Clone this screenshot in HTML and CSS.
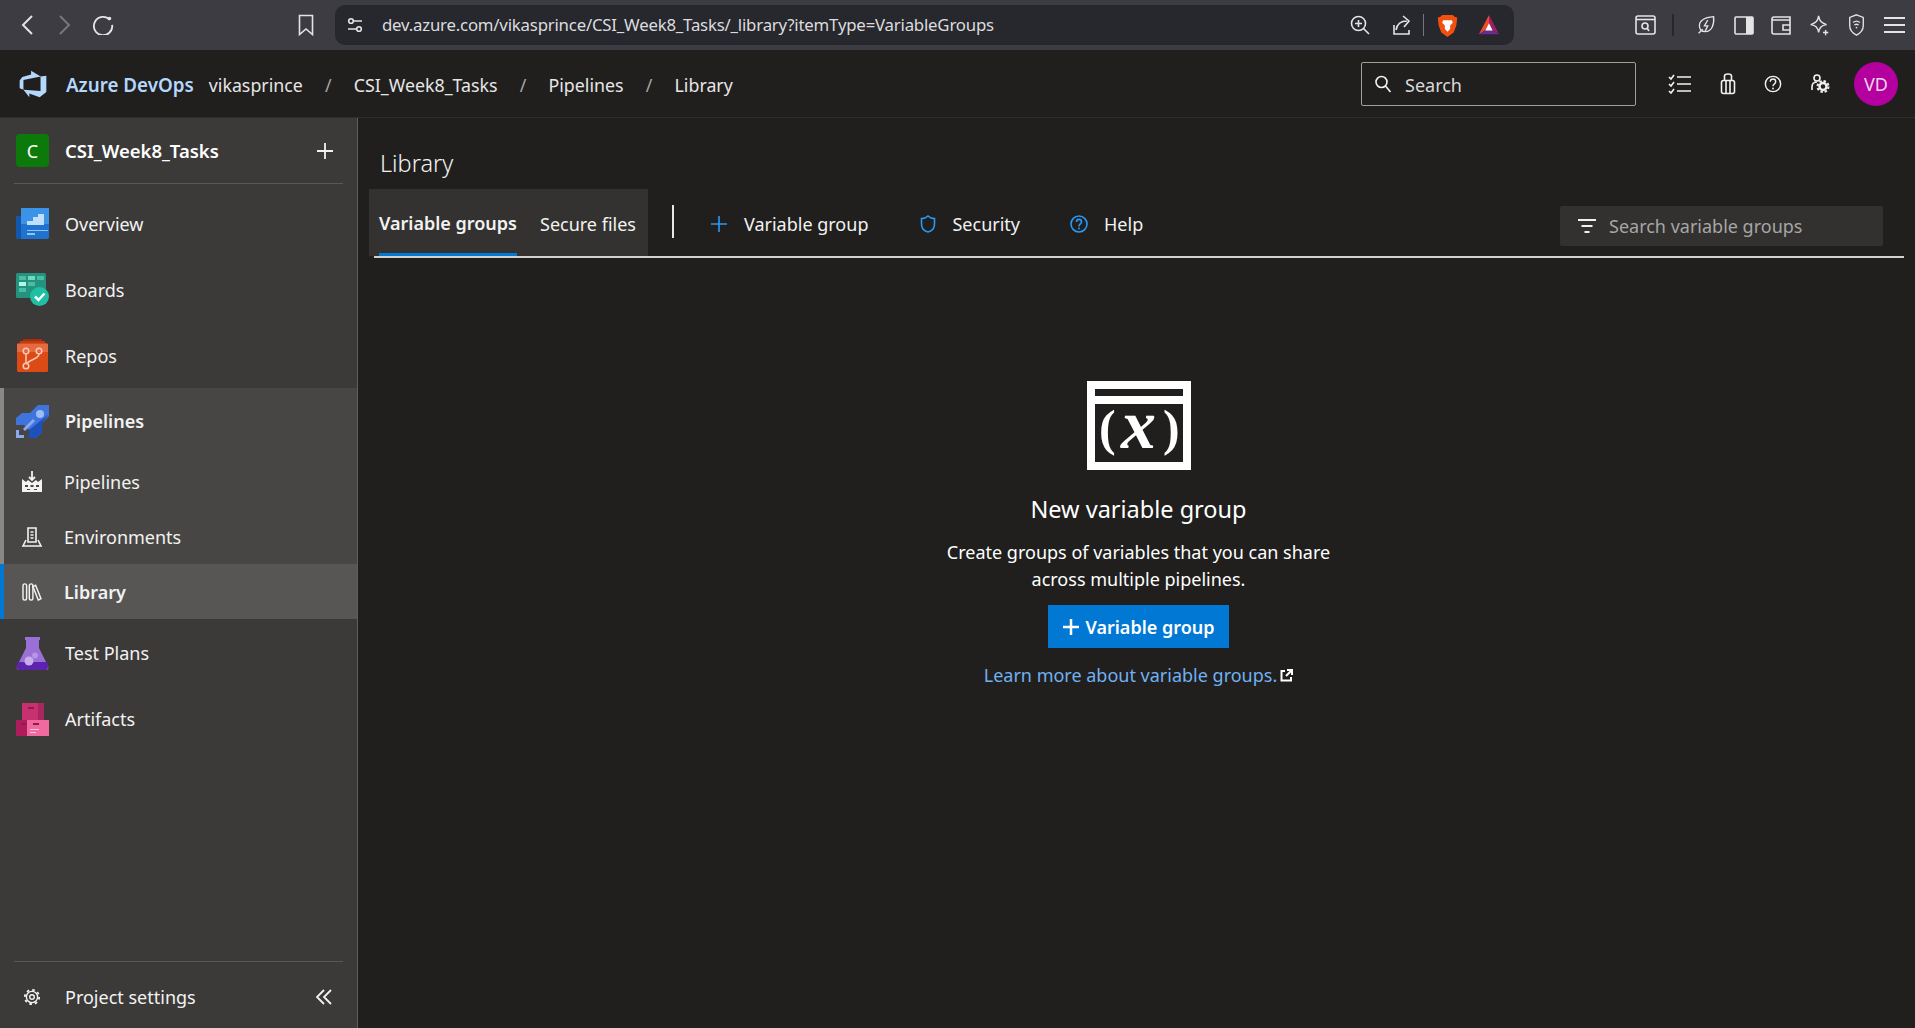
FILE: index.html
```html
<!DOCTYPE html>
<html lang="en">
<head>
    <meta charset="UTF-8">
    <title>Library - Azure DevOps</title>
    <link rel="stylesheet" href="styles.css">
</head>
<body>
    <div class="browser-bar">
        <svg class="b-back" width="16" height="24" viewBox="0 0 16 24"><path d="M12 3 3 12l9 9" class="ln"/></svg>
        <svg class="b-forward" width="16" height="24" viewBox="0 0 16 24"><path d="M4 3l9 9-9 9" class="ln dim"/></svg>
        <svg class="b-reload" width="22" height="22" viewBox="0 0 24 24"><path d="M19.500 7.500A10 10 0 1 0 22 13" class="ln"/><circle cx="19" cy="6" r="2" fill="#e4e4e6"/></svg>
        <svg class="b-mark" width="16" height="22" viewBox="0 0 16 22"><path d="M1.500 1.500h13v19L8 15l-6.500 5.500z" class="ln thin"/></svg>
        <div class="address">
            <svg width="16" height="16" viewBox="0 0 16 16"><circle cx="4" cy="4" r="2.300" class="ln thin"/><path d="M7 4h8M1 12h8" class="ln thin"/><circle cx="12" cy="12" r="2.300" class="ln thin"/></svg>
            <span class="url">dev.azure.com/vikasprince/CSI_Week8_Tasks/_library?itemType=VariableGroups</span>
            <svg class="a-zoom" width="20" height="20" viewBox="0 0 20 20"><circle cx="8.500" cy="8.500" r="7" class="ln thin"/><path d="M13.500 13.500l5.500 5.500M8.500 5v7M5 8.500h7" class="ln thin"/></svg>
            <svg class="a-share" width="20" height="20" viewBox="0 0 20 20"><path d="M2 10v9h15v-4M4 15c1-6 5-9 11-9M11 1l6 5-5 6" class="ln thin"/></svg>
            <span class="a-sep"></span>
            <svg class="a-brave" width="21" height="23" viewBox="0 0 22 26"><path d="M5 1h12l2 2 3 1-1 9-3 8-7 5-7-5-3-8L0 4l3-1z" fill="#f1500f"/><path d="M6 7h10l1 3-3 3v4l-3 3-3-3v-4L5 10z" fill="#fff"/></svg>
            <svg class="a-bat" width="24" height="22" viewBox="0 0 24 24"><path d="M12 1 1 22l11-7z" fill="#ee4b2b"/><path d="M12 1l11 21-11-7z" fill="#9e1f63"/><path d="M1 22h22l-11-7z" fill="#6b2c91"/><path d="M12 10l-4 8h8z" fill="#fff"/></svg>
        </div>
        <div class="browser-tools">
            <svg width="21" height="20" viewBox="0 0 21 20"><rect x="1" y="1" width="19" height="18" rx="2" class="ln thin"/><path d="M1 4.500h19" class="ln thin"/><circle cx="10" cy="11" r="3" class="ln thin"/><path d="M12 13l2 3" class="ln thin"/></svg>
            <span class="tool-sep"></span>
            <svg width="19" height="20" viewBox="0 0 21 24"><path d="M2 13c0-6 6-10 17-11 1 9-2 18-10 18-5 0-7-3-7-7zM1 22l5-5M12 6l-4 7h4l-3 6" class="ln thin"/></svg>
            <svg width="20" height="19" viewBox="0 0 20 19"><rect x="1" y="1" width="18" height="17" rx="1" class="ln thin"/><rect x="12" y="1" width="7" height="17" fill="#e4e4e6"/></svg>
            <svg width="20" height="19" viewBox="0 0 20 19"><path d="M19 4V1H3a2 2 0 0 0-2 2v13a2 2 0 0 0 2 2h16v-4M1 4h18v10h-7v-5h7" class="ln thin"/></svg>
            <svg width="21" height="21" viewBox="0 0 22 24"><path d="M10 1c1 6 3 8 9 10-6 1-8 3-9 9-1-6-3-8-9-9 6-2 8-4 9-10z" class="ln thin"/><path d="M18 17v6M15 20h6" class="ln thin"/></svg>
            <svg width="19" height="22" viewBox="0 0 20 26"><path d="M10 1l8 3v10c0 5-4 9-8 11-4-2-8-6-8-11V4z" class="ln thin"/><path d="M6 10c2.500-2 5.500-2 8 0M7.500 13c1.500-1 3.500-1 5 0" class="ln thin"/><circle cx="10" cy="16" r="1" fill="#e4e4e6"/></svg>
            <svg width="21" height="18" viewBox="0 0 21 18"><path d="M0 2h21M0 9h21M0 16h21" class="ln"/></svg>
        </div>
    </div>

    <header class="top-nav">
        <svg class="logo" width="30" height="30" viewBox="0 0 18 18"><path d="M17 4v9.740l-4 3.280-6.200-2.260V17l-3.510-4.590 10.230.8V4.440zm-3.410.49L7.850 1v2.290L2.580 4.840 1 6.870v4.610l2.260 1V6.570z" fill="#b4d8fb"/></svg>
        <span class="brand">Azure DevOps</span>
        <nav class="crumbs">
            <span>vikasprince</span><i>/</i>
            <span>CSI_Week8_Tasks</span><i>/</i>
            <span>Pipelines</span><i>/</i>
            <span>Library</span>
        </nav>
        <div class="global-search">
            <svg width="18" height="18" viewBox="0 0 18 18"><circle cx="7.500" cy="7" r="5.500" class="ln thin"/><path d="M11.500 11l5 6" class="ln thin"/></svg>
            <span>Search</span>
        </div>
        <div class="top-icons">
            <svg width="24" height="20" viewBox="0 0 24 20"><path d="M9 3h14M9 10h14M9 17h14M1 3l2 2 3-4M1 10l2 2 3-4M1 17l2 2 3-4" class="ln thin"/></svg>
            <svg width="16" height="22" viewBox="0 0 16 22"><rect x="1.500" y="7.500" width="13" height="13" rx="2" class="ln thin"/><path d="M4.500 7.500V3a3.500 2 0 0 1 7 0v4.500M6 7.500v13M10 7.500v13" class="ln thin"/></svg>
            <svg width="18" height="18" viewBox="0 0 20 20"><circle cx="10" cy="10" r="8.500" class="ln thin"/><path d="M7 7.500c0-4 6-4 6 0 0 2.500-3 2.500-3 5" class="ln thin"/><circle cx="10" cy="15" r="1" fill="#f0f0f0"/></svg>
            <svg width="20" height="19" viewBox="0 0 20 19"><circle cx="7" cy="4" r="3" class="ln thin"/><path d="M2 16v-3c0-3 2-5 5-5" class="ln thin"/><circle cx="13" cy="12.500" r="3.500" fill="none" stroke="#f0f0f0" stroke-width="2.500"/><circle cx="13" cy="12.500" r="5.500" fill="none" stroke="#f0f0f0" stroke-width="2" stroke-dasharray="2.500 1.800"/></svg>
            <div class="avatar">VD</div>
        </div>
    </header>

    <div class="page">
        <aside class="sidebar">
            <div class="project">
                <div class="project-badge">C</div>
                <span class="project-name">CSI_Week8_Tasks</span>
                <svg class="project-add" width="18" height="18" viewBox="0 0 18 18"><path d="M9 1v16M1 9h16" class="ln plain"/></svg>
            </div>
            <ul class="nav-list first">
                <li class="nav-item">
                    <svg class="nav-icon" width="33" height="31" viewBox="0 0 33 31"><path d="M5 0h26a2 2 0 0 1 2 2v27a2 2 0 0 1-2 2H2a2 2 0 0 1-2-2V8h5z" fill="#1f72d0"/><path d="M5 0h28v16H5z" fill="#3b93e8"/><path d="M0 8h5v23H2a2 2 0 0 1-2-2z" fill="#1257ab"/><path d="M11 17v-4h6V9h5V6h6v11z" fill="#bfe0fb"/><path d="M11 22h21v1H11zM11 25h8v2h-8z" fill="#8ec5f5"/></svg>
                    <span>Overview</span>
                </li>
                <li class="nav-item">
                    <svg class="nav-icon" width="33" height="33" viewBox="0 0 33 33"><rect width="30" height="25" rx="1.500" fill="#24927f"/><path d="M3 3h7v4H3zM12 3h7v4h-7zM21 3h7v4h-7zM12 9h7v4h-7zM3 15h7v4H3z" fill="#46bda4"/><path d="M3 9h7v4H3z" fill="#b3f5e3"/><path d="M12 3h7v4h-7z" fill="#72d8c2"/><circle cx="23.500" cy="23.500" r="9.500" fill="#1fbfa4"/><path d="M19 23.500l3.500 3.500 6-6.500" fill="none" stroke="#fff" stroke-width="2.500"/></svg>
                    <span>Boards</span>
                </li>
                <li class="nav-item">
                    <svg class="nav-icon" width="33" height="33" viewBox="0 0 33 33"><path d="M7 0h19v4H7z" fill="#a82e10"/><path d="M4 2h25v4H4z" fill="#c03d14"/><rect x="1" y="4" width="31" height="29" rx="1.500" fill="#dc4a16"/><path d="M1 5h31v8H1z" fill="#e66a3f"/><circle cx="10" cy="12" r="2.800" fill="none" stroke="#fbc9b2" stroke-width="1.500"/><circle cx="23" cy="12" r="2.800" fill="none" stroke="#fbc9b2" stroke-width="1.500"/><circle cx="10" cy="27" r="2.800" fill="none" stroke="#fbc9b2" stroke-width="1.500"/><path d="M10 15v9M23 15c0 5-7 4-13 10" fill="none" stroke="#fbc9b2" stroke-width="1.500"/></svg>
                    <span>Repos</span>
                </li>
            </ul>
            <div class="nav-group">
                <div class="nav-item group-head">
                    <svg class="nav-icon" width="33" height="33" viewBox="0 0 33 33"><path d="M22 0h11v11l-7 7v9l-6 6h-7v-8l-5-5H0v-7l6-5h8z" fill="#3f74dd"/><path d="M33 9l-7 9v9l-6 6h-7v-8z" fill="#1d4fbd"/><circle cx="24" cy="9" r="4" fill="#9dbdf5"/><path d="M8 25l10-10" stroke="#8aa9ef" stroke-width="3"/><path d="M0 25v8h8v-3H3v-5z" fill="#8aa9ef"/></svg>
                    <span>Pipelines</span>
                </div>
                <div class="nav-sub">
                    <svg width="22" height="22" viewBox="0 0 22 22"><path d="M11 0v9M8 6l3 3 3-3" class="ln plain"/><path d="M1 8v13h20V8l-4 3-2-2-4 3-4-3-2 2z" fill="#f3f3f3"/><path d="M4 14h3v2H4zM9.500 14h3v2h-3zM15 14h3v2h-3zM6 18h3v1H6zM13 18h3v1h-3z" fill="#484644"/></svg>
                    <span>Pipelines</span>
                </div>
                <div class="nav-sub">
                    <svg width="20" height="20" viewBox="0 0 20 20"><path d="M6 1h8v14H6zM8.500 5h3M8.500 8h3M8.500 11h3" class="ln thin"/><path d="M4 13l-3 6h18l-3-6" class="ln thin"/></svg>
                    <span>Environments</span>
                </div>
                <div class="nav-sub current">
                    <svg width="22" height="18" viewBox="0 0 22 20"><rect x="1" y="1" width="4" height="18" rx="2" class="ln thin"/><rect x="8" y="1" width="4" height="18" rx="2" class="ln thin"/><path d="M15 2.500l6 15-3 1.500-6-15z" class="ln thin"/></svg>
                    <span>Library</span>
                </div>
            </div>
            <ul class="nav-list after-group">
                <li class="nav-item">
                    <svg class="nav-icon" width="33" height="33" viewBox="0 0 33 33"><path d="M9 0h15v3h-1v8l9 18c1 2 0 4-2 4H3c-2 0-3-2-2-4l9-18V3H9z" fill="#9a6fd6"/><path d="M1.500 25h30l.5 4c0 2-1 4-2 4H3c-1 0-3-2-2-4z" fill="#5e23ac"/><circle cx="13" cy="24" r="4.500" fill="#c7aeea"/><circle cx="19" cy="18.500" r="3" fill="#b596e2"/></svg>
                    <span>Test Plans</span>
                </li>
                <li class="nav-item">
                    <svg class="nav-icon" width="33" height="33" viewBox="0 0 33 33"><path d="M6 0h22v18H6z" fill="#c7316f"/><path d="M22 0h6v18h-6z" fill="#a92660"/><path d="M0 17h12v16H0z" fill="#ae1c5b"/><path d="M11 17h22v16H11z" fill="#f06a9f"/><path d="M12 4h6v2h-6zM17 20h6v2h-6zM5 20h5v2H5z" fill="#8f1a4c"/><path d="M14 26h9v1h-9zM14 29h6v1h-6z" fill="#fbc3da"/></svg>
                    <span>Artifacts</span>
                </li>
            </ul>
            <div class="side-foot">
                <svg width="18" height="18" viewBox="0 0 18 18"><circle cx="9" cy="9" r="5.600" fill="none" stroke="#f2f2f2" stroke-width="1.400"/><circle cx="9" cy="9" r="7.200" fill="none" stroke="#f2f2f2" stroke-width="1.800" stroke-dasharray="2.600 3.050"/><circle cx="9" cy="9" r="2.300" fill="none" stroke="#f2f2f2" stroke-width="1.400"/></svg>
                <span class="foot-label">Project settings</span>
                <svg class="foot-collapse" width="16" height="16" viewBox="0 0 16 16"><path d="M8 1 1 8l7 7M15 1 8 8l7 7" class="ln plain"/></svg>
            </div>
        </aside>

        <main class="content">
            <h1 class="page-title">Library</h1>
            <div class="toolbar">
                <div class="tabs">
                    <div class="tab active">Variable groups</div>
                    <div class="tab">Secure files</div>
                </div>
                <span class="tool-divider"></span>
                <div class="cmd cmd-add">
                    <svg width="16" height="16" viewBox="0 0 16 16"><path d="M8 0v16M0 8h16" class="ln blue"/></svg>
                    <span>Variable group</span>
                </div>
                <div class="cmd cmd-sec">
                    <svg width="16" height="18" viewBox="0 0 16 18"><path d="M8 1c2 2 4 2.500 6.500 2.500V9c0 4-3 7-6.500 8-3.500-1-6.500-4-6.500-8V3.500C4 3.500 6 3 8 1z" class="ln blue"/></svg>
                    <span>Security</span>
                </div>
                <div class="cmd cmd-help">
                    <svg width="18" height="18" viewBox="0 0 18 18"><circle cx="9" cy="9" r="8" class="ln blue"/><path d="M6.500 7c0-3.500 5-3.500 5 0 0 2-2.500 2-2.500 4.500" class="ln blue"/><circle cx="9" cy="13.500" r="1" fill="#2899f5"/></svg>
                    <span>Help</span>
                </div>
                <div class="filter-box">
                    <svg width="18" height="14" viewBox="0 0 18 14"><path d="M0 1h18M3.500 7h11M6.500 13h5" class="ln plain"/></svg>
                    <span>Search variable groups</span>
                </div>
            </div>
            <section class="empty">
                <svg class="empty-art" width="104" height="89" viewBox="0 0 104 89">
                    <rect x="4" y="4" width="96" height="81" fill="none" stroke="#fff" stroke-width="8"/>
                    <path d="M4 19h96" stroke="#fff" stroke-width="8"/>
                    <text x="12" y="64" class="art-paren">(</text>
                    <text x="34" y="67" class="art-x">x</text>
                    <text x="76" y="64" class="art-paren">)</text>
                </svg>
                <h2 class="empty-title">New variable group</h2>
                <p class="empty-text">Create groups of variables that you can share<br>across multiple pipelines.</p>
                <button class="primary">
                    <svg width="18" height="18" viewBox="0 0 18 18"><path d="M9 1v16M1 9h16" fill="none" stroke="#fff" stroke-width="2.500"/></svg>
                    Variable group
                </button>
                <div class="learn">
                    <span>Learn more about variable groups.</span>
                    <svg width="13" height="13" viewBox="0 0 13 13"><path d="M5 2H1.500v9.500H11V8" fill="none" stroke="#fff" stroke-width="2"/><path d="M7 1h5v5M12 1 6 7" fill="none" stroke="#fff" stroke-width="2"/></svg>
                </div>
            </section>
        </main>
    </div>
</body>
</html>
```

FILE: styles.css
```css
* { box-sizing: border-box; }
html, body { height: 100%; }
body { margin: 0; height: 1028px; overflow: hidden; background: #201f1e; color: #f2f2f2; font-family: "Noto Sans", "Open Sans", sans-serif; font-size: 18px; }
svg { display: block; flex: none; }
ul { list-style: none; margin: 0; padding: 0; }

.ln { fill: none; stroke: #e4e4e6; stroke-width: 2; }
.ln.thin { stroke-width: 1.6; }
.ln.dim { stroke: #77777c; }
.ln.plain { stroke: #f2f2f2; stroke-width: 1.800; }
.top-nav .ln, .side-foot .ln, .nav-sub .ln { stroke: #f2f2f2; }
.ln.blue { stroke: #2899f5; stroke-width: 1.600; }

/* browser chrome */
.browser-bar { height: 50px; background: #3c3c42; display: flex; align-items: center; }
.b-back { margin-left: 20px; }
.b-forward { margin-left: 20px; }
.b-reload { margin-left: 20px; margin-top: -2px; }
.b-mark { margin-left: 184px; }
.address { margin-left: 21px; width: 1179px; height: 40px; background: #27272e; border-radius: 10px; display: flex; align-items: center; padding-left: 12px; }
.url { margin: -2px 0 0 19px; color: #dcdcde; font-size: 16.800px; letter-spacing: -0.2px; white-space: nowrap; width: 968px; }
.a-share { margin-left: 22px; }
.a-sep { width: 1px; height: 22px; background: #77777c; margin-left: 11px; }
.a-brave { margin-left: 13px; }
.a-bat { margin-left: 19px; }
.browser-tools { display: flex; align-items: center; margin-left: 121px; gap: 17.500px; }
.tool-sep { width: 2px; height: 22px; background: #27272e; margin: 0 6px 0 -2px; }

/* azure header */
.top-nav { height: 68px; background: #201f1e; border-bottom: 1px solid #2f2e2d; display: flex; align-items: center; padding-left: 18px; padding-top: 2px; }
.logo { margin-top: -2px; }
.brand { margin-left: 18px; font-weight: 600; color: #b4d8fb; font-size: 18.800px; white-space: nowrap; }
.crumbs { display: flex; align-items: center; margin-left: 15px; color: #e6e6e6; white-space: nowrap; font-size: 17.800px; }
.crumbs i { font-style: normal; color: #a6a6a6; width: 51px; text-align: center; }
.global-search { margin-left: auto; margin-top: -2px; width: 275px; height: 44px; border: 1px solid #a19f9d; border-radius: 2px; display: flex; align-items: center; padding-left: 12px; gap: 13px; color: #d9d9d9; }
.global-search span { padding-top: 2px; }
.top-icons { display: flex; align-items: center; margin-left: 32px; margin-right: 17px; gap: 28px; margin-top: -2px; }
.avatar { width: 44px; height: 44px; border-radius: 50%; background: #b4009e; color: #f0d4ec; display: flex; align-items: center; justify-content: center; font-size: 18px; margin-left: -4px; }

/* left navigation */
.page { display: flex; height: 910px; }
.sidebar { width: 358px; background: #3b3a39; border-right: 1px solid #605e5c; display: flex; flex-direction: column; flex: none; }
.project { height: 66px; margin: 0 14px; border-bottom: 1px solid #5a5856; display: flex; align-items: center; padding: 0 2px; }
.project-badge { width: 33px; height: 33px; background: #0b7a0b; border-radius: 4px; display: flex; align-items: center; justify-content: center; color: #fff; font-size: 18px; }
.project-name { margin-left: 16px; font-weight: 600; color: #fff; font-size: 18.500px; }
.project-add { margin-left: auto; margin-right: 7px; }
.nav-list.first { padding-top: 6px; }
.nav-list.first span { padding-top: 2px; }
.nav-list.after-group { padding-top: 1px; }
.nav-item { height: 66px; display: flex; align-items: center; padding-left: 16px; }
.nav-item span { margin-left: 16px; }
.nav-group { background: #484644; border-left: 4px solid #8a8886; }
.group-head { height: 66px; padding-left: 12px; font-weight: 600; }
.nav-sub { height: 55px; display: flex; align-items: center; }
.nav-sub svg { margin-left: 17px; width: 22px; }
.nav-sub span { margin-left: 21px; }
.nav-sub.current { background: #575655; font-weight: 600; margin-left: -4px; border-left: 4px solid #0078d4; }
.side-foot { margin: auto 14px 0; height: 67px; padding: 4px 0 0 9px; border-top: 1px solid #5a5856; display: flex; align-items: center; }
.foot-label { margin-left: 24px; }
.foot-collapse { margin-left: auto; margin-right: 11px; }

/* main area */
.content { flex: 1; padding: 0 11px; }
.page-title { margin: 0; height: 71px; padding: 27px 0 0 11px; font-size: 23.500px; font-weight: 300; line-height: 36px; color: #f2f2f2; }
.toolbar { display: flex; height: 69px; align-items: stretch; border-bottom: 2px solid #d2d0ce; margin-left: 5px; }
.tabs { display: flex; background: #333231; margin-left: -5px; padding: 0 12px 0 10px; height: 67px; }
.tab { display: flex; align-items: center; white-space: nowrap; margin-right: 23px; height: 67px; padding-top: 3px; }
.tab:last-child { margin-right: 0; }
.tab.active { font-weight: 600; border-bottom: 3px solid #0078d4; }
.tool-divider { width: 2px; height: 33px; background: #e6e6e6; margin: 16px 0 0 24px; }
.cmd { display: flex; align-items: center; gap: 17px; white-space: nowrap; padding-top: 3px; }
.cmd-add { margin-left: 37px; }
.cmd-sec { margin-left: 52px; gap: 16px; }
.cmd-help { margin-left: 50px; gap: 16px; }
.filter-box { margin: 17px 21px 0 auto; width: 323px; height: 40px; background: #323130; border-radius: 2px; display: flex; align-items: center; padding-left: 18px; gap: 13px; color: #a6a6a6; }

.empty { display: flex; flex-direction: column; align-items: center; padding: 123px 0 0 4px; }
.art-paren { font-family: "Liberation Serif", serif; font-size: 50px; font-weight: 700; fill: #fff; }
.art-x { font-family: "Liberation Serif", serif; font-size: 70px; font-weight: 700; font-style: italic; fill: #fff; }
.empty-title { margin: 19px 0 0; font-size: 23.500px; font-weight: 400; line-height: 40px; color: #fff; }
.empty-text { margin: 10px 0 0; text-align: center; line-height: 27px; color: #fff; }
.primary { margin-top: 12px; width: 181px; height: 43px; background: #0078d4; border: 0; color: #fff; font: 600 18px "Noto Sans", sans-serif; display: flex; align-items: center; justify-content: center; gap: 5px; }
.learn { margin-top: 13px; display: flex; align-items: center; gap: 3px; color: #71b1f1; line-height: 28px; }
```
